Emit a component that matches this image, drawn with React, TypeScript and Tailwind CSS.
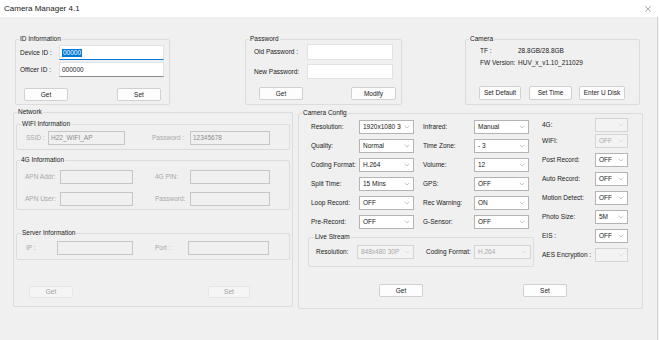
import type { ReactNode } from 'react';
import { ChevronDown, X } from 'lucide-react';

function Group({
  title,
  className = '',
  legendClass = 'ml-[3px]',
  children,
}: {
  title: string;
  className?: string;
  legendClass?: string;
  children?: ReactNode;
}) {
  return (
    <fieldset className={`border border-[#dcdcdc] rounded-[2px] ${className}`}>
      <legend className={`px-[1px] leading-[8px] text-[#1a1a1a] ${legendClass}`}>{title}</legend>
      {children}
    </fieldset>
  );
}

function Label({ children, className = '', disabled }: { children: ReactNode; className?: string; disabled?: boolean }) {
  return (
    <span className={`shrink-0 whitespace-nowrap ${disabled ? 'text-[#a8a8a8]' : 'text-[#1a1a1a]'} ${className}`}>
      {children}
    </span>
  );
}

function Edit({ children, className = '', disabled }: { children?: ReactNode; className?: string; disabled?: boolean }) {
  return (
    <div
      className={`shrink-0 flex items-center pl-[2px] border ${
        disabled ? 'bg-[#f0f0f0] border-[#c6c6c6] text-[#8c8c8c]' : 'bg-white border-[#e2e2e2] border-b-[#8a8a8a] text-[#1a1a1a]'
      } ${className}`}
    >
      {children}
    </div>
  );
}

function Combo({ value = '', className = '', disabled }: { value?: string; className?: string; disabled?: boolean }) {
  return (
    <div
      className={`shrink-0 h-[14px] flex items-center border ${
        disabled ? 'bg-[#f3f3f3] border-[#d4d4d4] text-[#a8a8a8]' : 'bg-white border-[#b4b4b4] text-[#1a1a1a]'
      } ${className}`}
    >
      <span className="flex-1 overflow-hidden whitespace-nowrap pl-[3px]">{value}</span>
      <ChevronDown
        size={8}
        strokeWidth={1.3}
        className={`shrink-0 mx-[2px] ${disabled ? 'text-[#c4c4c4]' : 'text-[#7e7e7e]'}`}
      />
    </div>
  );
}

function Button({ children, className = '', disabled }: { children: ReactNode; className?: string; disabled?: boolean }) {
  return (
    <button
      className={`shrink-0 flex items-center justify-center rounded-[2px] border ${
        disabled ? 'bg-[#f5f5f5] border-[#e6e6e6] text-[#a0a0a0]' : 'bg-[#fdfdfd] border-[#d0d0d0] text-[#1a1a1a]'
      } ${className}`}
    >
      {children}
    </button>
  );
}

const leftRows = [
  ['Resolution:', '1920x1080 30P', 'Infrared:', 'Manual'],
  ['Quality:', 'Normal', 'Time Zone:', '- 3'],
  ['Coding Format:', 'H.264', 'Volume:', '12'],
  ['Split Time:', '15 Mins', 'GPS:', 'OFF'],
  ['Loop Record:', 'OFF', 'Rec Warning:', 'ON'],
  ['Pre-Record:', 'OFF', 'G-Sensor:', 'OFF'],
];

const rightRows: { label: string; value: string; disabled?: boolean; className: string }[] = [
  { label: '4G:', value: '', disabled: true, className: 'mt-[1px]' },
  { label: 'WIFI:', value: 'OFF', disabled: true, className: 'mt-[2px]' },
  { label: 'Post Record:', value: 'OFF', className: 'mt-[5px]' },
  { label: 'Auto Record:', value: 'OFF', className: 'mt-[5px]' },
  { label: 'Motion Detect:', value: 'OFF', className: 'mt-[5px]' },
  { label: 'Photo Size:', value: '5M', className: 'mt-[5px]' },
  { label: 'EIS :', value: 'OFF', className: 'mt-[5px]' },
  { label: 'AES Encryption :', value: '', disabled: true, className: 'mt-[5px]' },
];

export default function App() {
  return (
    <div className="w-[659px] h-[340px] flex flex-col overflow-hidden bg-[#f0f0f0] font-['Liberation_Sans',Arial,sans-serif] text-[6.5px] leading-[8px]">
      {/* Title bar */}
      <div className="h-[17px] shrink-0 bg-white flex items-center justify-between pl-[4px] pr-[6px]">
        <span className="text-[8px] text-[#1a1a1a]">Camera Manager 4.1</span>
        <X size={10} strokeWidth={1} className="text-[#333]" />
      </div>

      <div className="flex-1 flex flex-col w-[658px] border-r border-[#d6d6d6]">
        {/* Top row */}
        <div className="flex pt-[18px] pl-[15px]">
          <Group title="ID Information" className="w-[155px] h-[70px]">
            <div className="flex flex-col pl-[4px]">
              <div className="flex items-center mt-[2px]">
                <Label className="w-[39px]">Device ID :</Label>
                <Edit className="w-[105px] h-[15px] border-b-[#0078d7]">
                  <span className="bg-[#0078d7] text-white px-[1px]">00000</span>
                </Edit>
              </div>
              <div className="flex items-center mt-[2px]">
                <Label className="w-[39px]">Officer ID :</Label>
                <Edit className="w-[105px] h-[15px]">000000</Edit>
              </div>
              <div className="flex mt-[11px]">
                <Button className="ml-[4px] w-[44px] h-[13px]">Get</Button>
                <Button className="ml-[49px] w-[44px] h-[13px]">Set</Button>
              </div>
            </div>
          </Group>

          <Group title="Password" className="ml-[75px] w-[157px] h-[70px]">
            <div className="flex flex-col pl-[8px]">
              <div className="flex items-center mt-[1px]">
                <Label className="w-[53px]">Old Password :</Label>
                <Edit className="w-[86px] h-[16px] border-b-[#e2e2e2]" />
              </div>
              <div className="flex items-center mt-[4px]">
                <Label className="w-[53px]">New Password:</Label>
                <Edit className="w-[86px] h-[15px] border-b-[#e2e2e2]" />
              </div>
              <div className="flex mt-[8px]">
                <Button className="ml-[5px] w-[44px] h-[13px]">Get</Button>
                <Button className="ml-[48px] w-[45px] h-[13px]">Modify</Button>
              </div>
            </div>
          </Group>

          <Group title="Camera" className="ml-[63px] w-[175px] h-[70px]">
            <div className="flex flex-col mt-[2px] pl-[14px]">
              <div className="flex items-center h-[12px]">
                <Label className="w-[38px]">TF :</Label>
                <Label>28.8GB/28.8GB</Label>
              </div>
              <div className="flex items-center h-[12px]">
                <Label className="w-[38px]">FW Version:</Label>
                <Label>HUV_x_v1.10_211029</Label>
              </div>
            </div>
            <div className="flex mt-[17px] pl-[13px]">
              <Button className="w-[42px] h-[14px]">Set Default</Button>
              <Button className="ml-[8px] w-[43px] h-[14px]">Set Time</Button>
              <Button className="ml-[7px] w-[46px] h-[14px]">Enter U Disk</Button>
            </div>
          </Group>
        </div>

        {/* Bottom row */}
        <div className="flex items-start mt-[3px] pl-[13px]">
          <Group title="Network" className="w-[279px] h-[199px]" legendClass="ml-[3px]">
            <div className="flex flex-col px-[2px]">
              <Group title="WIFI Information" className="mt-[4px] w-[274px] h-[30px]" legendClass="ml-[4px]">
                <div className="flex items-center mt-[3px] pl-[9px]">
                  <Label disabled className="w-[22px]">SSID :</Label>
                  <Edit disabled className="w-[77px] h-[14px]">H22_WIFI_AP</Edit>
                  <Label disabled className="ml-[27px] w-[38px]">Password :</Label>
                  <Edit disabled className="w-[80px] h-[14px]">12345678</Edit>
                </div>
              </Group>

              <Group title="4G Information" className="mt-[6px] w-[274px] h-[54px]">
                <div className="flex items-center mt-[6px] pl-[8px]">
                  <Label disabled className="w-[35px]">APN Addr:</Label>
                  <Edit disabled className="w-[73px] h-[14px]" />
                  <Label disabled className="ml-[22px] w-[35px]">4G PIN:</Label>
                  <Edit disabled className="w-[80px] h-[14px]" />
                </div>
                <div className="flex items-center mt-[8px] pl-[8px]">
                  <Label disabled className="w-[35px]">APN User:</Label>
                  <Edit disabled className="w-[73px] h-[14px]" />
                  <Label disabled className="ml-[22px] w-[35px]">Password:</Label>
                  <Edit disabled className="w-[80px] h-[14px]" />
                </div>
              </Group>

              <Group title="Server Information" className="mt-[19px] w-[274px] h-[31px]" legendClass="ml-[4px]">
                <div className="flex items-center mt-[4px] pl-[9px]">
                  <Label disabled className="w-[31px]">IP :</Label>
                  <Edit disabled className="w-[76px] h-[14px]" />
                  <Label disabled className="ml-[22px] w-[33px]">Port :</Label>
                  <Edit disabled className="w-[81px] h-[14px]" />
                </div>
              </Group>

              <div className="flex mt-[26px]">
                <Button disabled className="ml-[13px] w-[44px] h-[12px]">Get</Button>
                <Button disabled className="ml-[135px] w-[42px] h-[12px]">Set</Button>
              </div>
            </div>
          </Group>

          <Group title="Camera Config" className="ml-[5px] mt-[1px] w-[345px] h-[200px]">
            <div className="flex flex-col pl-[12px]">
              <div className="flex items-start">
                <div className="w-[223px] shrink-0 flex flex-col">
                  <div className="flex flex-col gap-[5px] mt-[3px]">
                    {leftRows.map(([l1, v1, l2, v2]) => (
                      <div key={l1} className="flex items-center h-[14px]">
                        <Label className="w-[48px]">{l1}</Label>
                        <Combo value={v1} className="w-[55px]" />
                        <Label className="ml-[9px] w-[51px]">{l2}</Label>
                        <Combo value={v2} className="w-[55px]" />
                      </div>
                    ))}
                  </div>
                  <Group title="Live Stream" className="mt-[4px] -ml-[3px] w-[226px] h-[34px]" legendClass="ml-[5px]">
                    <div className="flex items-center mt-[4px] pl-[7px]">
                      <Label className="w-[41px]">Resolution:</Label>
                      <Combo disabled value="848x480 30P" className="w-[57px]" />
                      <Label className="ml-[12px] w-[48px]">Coding Format:</Label>
                      <Combo disabled value="H.264" className="w-[57px]" />
                    </div>
                  </Group>
                </div>

                <div className="ml-[8px] flex flex-col">
                  {rightRows.map((r) => (
                    <div key={r.label} className={`flex items-center h-[14px] ${r.className}`}>
                      <Label className="w-[53px]">{r.label}</Label>
                      <Combo value={r.value} disabled={r.disabled} className="w-[33px]" />
                    </div>
                  ))}
                </div>
              </div>

              <div className="flex mt-[17px]">
                <Button className="ml-[68px] w-[44px] h-[13px]">Get</Button>
                <Button className="ml-[100px] w-[44px] h-[13px]">Set</Button>
              </div>
            </div>
          </Group>
        </div>
      </div>
    </div>
  );
}
